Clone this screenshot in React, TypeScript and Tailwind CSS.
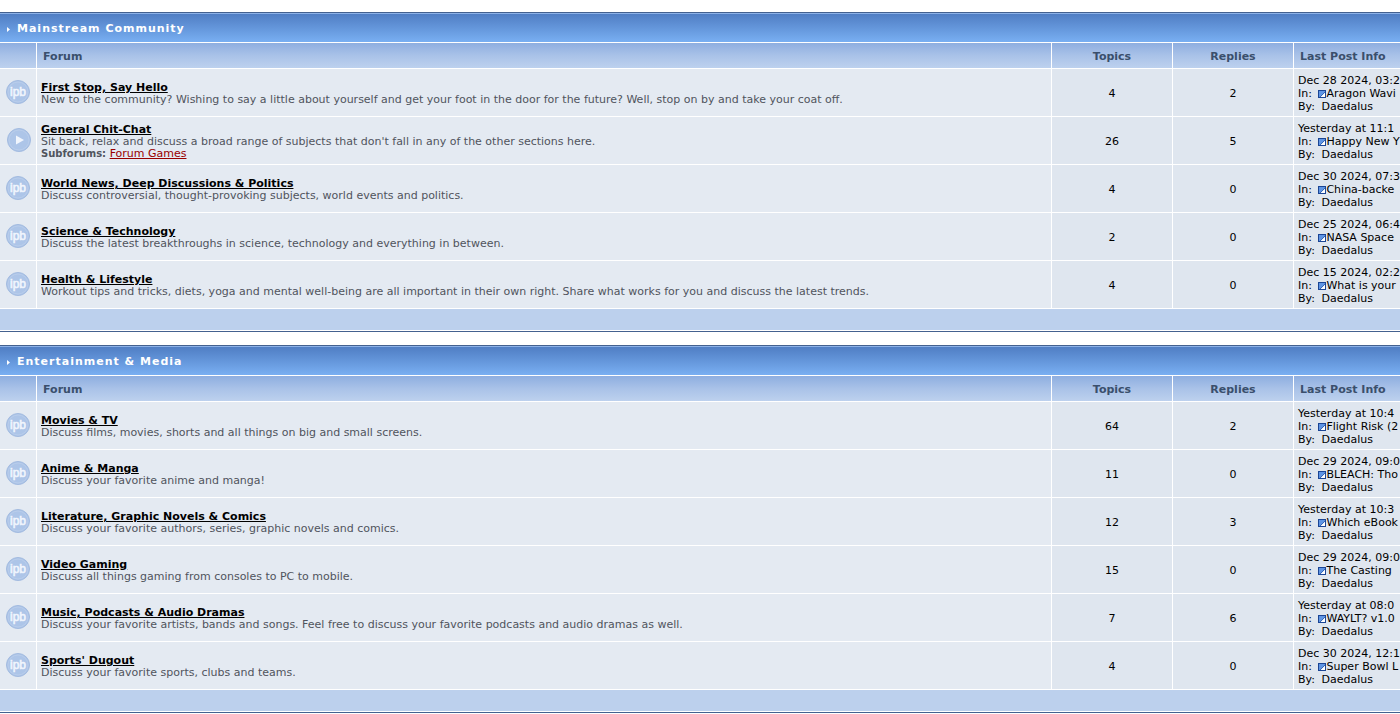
type Forum = {
  name: string;
  description: string;
  topics: number;
  replies: number;
  date: string;
  topic: string;
  subforum?: string;
};

type Category = { id: string; title: string; forums: Forum[] };

const categories: Category[] = [
  {
    id: "mainstream",
    title: "Mainstream Community",
    forums: [
      {
        name: "First Stop, Say Hello",
        description:
          "New to the community? Wishing to say a little about yourself and get your foot in the door for the future? Well, stop on by and take your coat off.",
        topics: 4,
        replies: 2,
        date: "Dec 28 2024, 03:2",
        topic: "Aragon Wavi",
      },
      {
        name: "General Chit-Chat",
        description:
          "Sit back, relax and discuss a broad range of subjects that don't fall in any of the other sections here.",
        topics: 26,
        replies: 5,
        date: "Yesterday at 11:1",
        topic: "Happy New Y",
        subforum: "Forum Games",
      },
      {
        name: "World News, Deep Discussions & Politics",
        description: "Discuss controversial, thought-provoking subjects, world events and politics.",
        topics: 4,
        replies: 0,
        date: "Dec 30 2024, 07:3",
        topic: "China-backe",
      },
      {
        name: "Science & Technology",
        description: "Discuss the latest breakthroughs in science, technology and everything in between.",
        topics: 2,
        replies: 0,
        date: "Dec 25 2024, 06:4",
        topic: "NASA Space",
      },
      {
        name: "Health & Lifestyle",
        description:
          "Workout tips and tricks, diets, yoga and mental well-being are all important in their own right. Share what works for you and discuss the latest trends.",
        topics: 4,
        replies: 0,
        date: "Dec 15 2024, 02:2",
        topic: "What is your",
      },
    ],
  },
  {
    id: "entertainment",
    title: "Entertainment & Media",
    forums: [
      {
        name: "Movies & TV",
        description: "Discuss films, movies, shorts and all things on big and small screens.",
        topics: 64,
        replies: 2,
        date: "Yesterday at 10:4",
        topic: "Flight Risk (2",
      },
      {
        name: "Anime & Manga",
        description: "Discuss your favorite anime and manga!",
        topics: 11,
        replies: 0,
        date: "Dec 29 2024, 09:0",
        topic: "BLEACH: Tho",
      },
      {
        name: "Literature, Graphic Novels & Comics",
        description: "Discuss your favorite authors, series, graphic novels and comics.",
        topics: 12,
        replies: 3,
        date: "Yesterday at 10:3",
        topic: "Which eBook",
      },
      {
        name: "Video Gaming",
        description: "Discuss all things gaming from consoles to PC to mobile.",
        topics: 15,
        replies: 0,
        date: "Dec 29 2024, 09:0",
        topic: "The Casting",
      },
      {
        name: "Music, Podcasts & Audio Dramas",
        description:
          "Discuss your favorite artists, bands and songs. Feel free to discuss your favorite podcasts and audio dramas as well.",
        topics: 7,
        replies: 6,
        date: "Yesterday at 08:0",
        topic: "WAYLT? v1.0",
      },
      {
        name: "Sports' Dugout",
        description: "Discuss your favorite sports, clubs and teams.",
        topics: 4,
        replies: 0,
        date: "Dec 30 2024, 12:1",
        topic: "Super Bowl L",
      },
    ],
  },
];

function ForumIcon({ hasSubforums }: { hasSubforums: boolean }) {
  return (
    <svg width="26" height="26" viewBox="0 0 26 26" className="mx-auto block" aria-hidden="true">
      {hasSubforums ? (
        <>
          <circle cx="14" cy="13" r="11.5" fill="#adc5e8" stroke="#a3bbe0" />
          <circle cx="14" cy="13" r="10" fill="none" stroke="#b9cdeb" />
          <path d="M11 8.5v9l8-4.5z" fill="#f0f5fd" />
        </>
      ) : (
        <>
          <circle cx="13" cy="13" r="11.5" fill="#adc5e8" stroke="#a3bbe0" />
          <circle cx="13" cy="13" r="10" fill="none" stroke="#b9cdeb" />
          <text
            x="13"
            y="17"
            textAnchor="middle"
            fill="#f0f5fd"
            stroke="#f0f5fd"
            strokeWidth="0.6"
            fontSize="12"
            fontFamily="Liberation Sans, sans-serif"
          >
            ipb
          </text>
        </>
      )}
    </svg>
  );
}

function LastPostIcon() {
  return (
    <svg width="8" height="8" viewBox="0 0 8 8" className="inline-block align-[-1px]" aria-hidden="true">
      <rect width="8" height="8" fill="#1b4594" />
      <rect x="1" y="1" width="6" height="6" fill="#5f95e4" />
      <path d="M7 2.5V7H2.5z" fill="#fff" />
      <path d="M2 7l5-5" stroke="#2c5aa8" strokeWidth="0.8" />
    </svg>
  );
}

function ForumRow({ forum }: { forum: Forum }) {
  return (
    <tr className="h-12">
      <td className="border-t border-white px-0 pt-0 pb-0.5">
        <ForumIcon hasSubforums={Boolean(forum.subforum)} />
      </td>
      <td className="border-t border-l border-white px-1 pt-0.5 pb-0">
        <a href="#" className="block w-fit leading-[13px] font-bold text-black underline">
          {forum.name}
        </a>
        <p className="leading-3 text-[#50545d]">{forum.description}</p>
        {forum.subforum && (
          <p className="leading-3 text-[#50545d]">
            <b className="text-[10px]">Subforums:</b>{" "}
            <a href="#" className="text-[#990000] underline">
              {forum.subforum}
            </a>
          </p>
        )}
      </td>
      <td className="border-t border-l border-white bg-[#dfe6ef] px-0 pt-0.5 pb-0 text-center">{forum.topics}</td>
      <td className="border-t border-l border-white bg-[#dfe6ef] px-0 pt-0.5 pb-0 text-center">{forum.replies}</td>
      <td className="overflow-hidden border-t border-l border-white bg-[#dfe6ef] pt-0.5 pr-0 pb-0 pl-1 leading-[13px] whitespace-nowrap">
        <p>{forum.date}</p>
        <p>
          In:{" "}
          <a href="#" className="ml-[3px]">
            <LastPostIcon />
            {forum.topic}
          </a>
        </p>
        <p>
          By:{" "}
          <a href="#" className="ml-[3px]">
            Daedalus
          </a>
        </p>
      </td>
    </tr>
  );
}

function CategoryPanel({ category }: { category: Category }) {
  const heading =
    "border-t border-l border-white bg-linear-to-b from-[#8eaee0] via-[#a9c2e8] to-[#bdd1ee] pt-0.5 pb-0 font-bold";
  return (
    <section aria-labelledby={category.id} className="border-y border-[#44618f]">
      <div className="flex h-[29px] items-center gap-[7px] border-t border-[#8db2e8] bg-linear-to-b from-[#507ec4] to-[#79aff2] pl-[7px] text-white">
        <svg width="3" height="5" viewBox="0 0 3 5" className="mt-0.5" aria-hidden="true">
          <path d="M0 0l3 2.5L0 5z" fill="currentColor" />
        </svg>
        <h2 id={category.id} className="font-bold tracking-[1px]">
          {category.title}
        </h2>
      </div>
      <table className="w-full table-fixed border-separate border-spacing-0 bg-[#e4eaf2]">
        <colgroup>
          <col className="w-9" />
          <col />
          <col className="w-[121px]" />
          <col className="w-[121px]" />
          <col className="w-[107px]" />
        </colgroup>
        <thead>
          <tr className="h-[26px] text-[#3a4f6c]">
            <td className="border-t border-white bg-linear-to-b from-[#8eaee0] via-[#a9c2e8] to-[#bdd1ee] p-0" />
            <th scope="col" className={`${heading} px-1.5 text-left`}>Forum</th>
            <th scope="col" className={`${heading} px-0 text-center`}>Topics</th>
            <th scope="col" className={`${heading} px-0 text-center`}>Replies</th>
            <th scope="col" className={`${heading} pr-0 pl-1.5 text-left whitespace-nowrap`}>Last Post Info</th>
          </tr>
        </thead>
        <tbody>
          {category.forums.map((forum) => (
            <ForumRow key={forum.name} forum={forum} />
          ))}
        </tbody>
      </table>
      <div className="h-[23px] border-y border-white bg-[#bcd0ed]" />
    </section>
  );
}

export default function App() {
  return (
    <main className="flex flex-col gap-[13px] overflow-hidden bg-white pt-3 font-['Verdana','DejaVu_Sans',sans-serif] text-[11px] leading-[13px] text-black">
      {categories.map((category) => (
        <CategoryPanel key={category.id} category={category} />
      ))}
    </main>
  );
}
